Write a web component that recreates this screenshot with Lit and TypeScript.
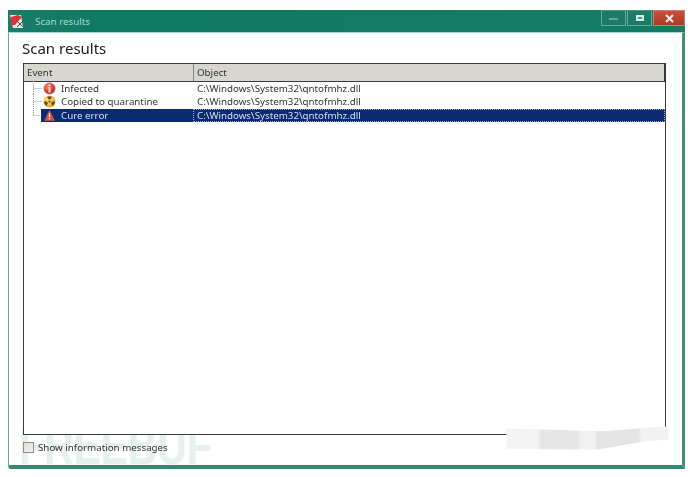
import { LitElement, html, css, svg } from "lit";
import { customElement } from "lit/decorators.js";

const path = "C:\\Windows\\System32\\qntofmhz.dll";

const infoIcon = html`<svg class="ic" viewBox="0 0 13 13"><defs><radialGradient id="r" cx=".4" cy=".35" r=".75"><stop offset="0" stop-color="#f09080"/><stop offset=".6" stop-color="#d5392b"/><stop offset="1" stop-color="#a81f18"/></radialGradient></defs><circle cx="6.5" cy="6.5" r="5.8" fill="url(#r)" stroke="#b9b2b0" stroke-width=".6"/><rect x="5.5" y="2.3" width="2" height="1.8" fill="#f6ded8"/><rect x="5.5" y="5.2" width="2" height="5.4" fill="#f6ded8"/></svg>`;

const radIcon = html`<svg class="ic" viewBox="0 0 13 13"><defs><radialGradient id="y" cx=".4" cy=".35" r=".8"><stop offset="0" stop-color="#fbe58a"/><stop offset=".7" stop-color="#e8b02c"/><stop offset="1" stop-color="#b58318"/></radialGradient></defs><circle cx="6.5" cy="6.5" r="6" fill="url(#y)"/><circle cx="6.5" cy="6.5" r="1.1" fill="#6a4c20"/><path d="M5.7 4.6 4.1 1.9A5.3 5.3 0 0 1 8.9 1.9L7.3 4.6A2.3 2.3 0 0 0 5.7 4.6Z" fill="#6a4c20"/><path d="M8.9 6.5H12A5.3 5.3 0 0 1 9.5 10.9L8 8.3A2.3 2.3 0 0 0 8.9 6.5Z" fill="#6a4c20"/><path d="M5 8.3 3.5 10.9A5.3 5.3 0 0 1 1 6.5H4.1A2.3 2.3 0 0 0 5 8.3Z" fill="#6a4c20"/></svg>`;

const warnIcon = html`<svg class="ic" viewBox="0 0 13 13"><path d="M6.5 1.5 11.5 11.5H1.5Z" fill="#d4503c" stroke="#c9604f" stroke-width=".5"/><rect x="5.8" y="4.4" width="1.4" height="3.8" fill="#f4dcd4"/><rect x="5.8" y="9" width="1.4" height="1.5" fill="#f4dcd4"/></svg>`;

const rows = [
  { icon: infoIcon, label: "Infected", sel: false },
  { icon: radIcon, label: "Copied to quarantine", sel: false },
  { icon: warnIcon, label: "Cure error", sel: true },
];

@customElement("app-root")
export class AppRoot extends LitElement {
  static styles = css`
    :host {
      display: block;
      width: 690px;
      height: 477px;
      background: #fff;
      overflow: hidden;
      position: relative;
      font-family: "Noto Sans", "DejaVu Sans", sans-serif;
      font-size: 9.75px;
      color: #333;
    }
    .desk {
      box-sizing: border-box;
      height: 477px;
      padding: 10px 5px 8px 8px;
      display: flex;
      position: relative;
      z-index: 1;
      filter: blur(0.3px);
    }
    .win {
      flex: 1;
      display: flex;
      flex-direction: column;
      min-width: 0;
    }
    .title {
      height: 22px;
      flex: none;
      background: linear-gradient(90deg, #1a7d68 0, #0f7a62 12%, #137c64 100%);
      display: flex;
      align-items: center;
      color: #a9d8cb;
      font-size: 9.8px;
      padding-left: 2px;
    }
    .logo {
      width: 13px;
      height: 14px;
      margin-right: 12px;
      flex: none;
    }
    .caps {
      margin-left: auto;
      display: flex;
      align-self: flex-start;
      gap: 1px;
      height: 16px;
    }
    .cap {
      box-sizing: border-box;
      width: 25px;
      border: 1px solid #5fae9c;
      border-top-color: #3d9582;
      background: #1d7a67;
      display: flex;
      align-items: center;
      justify-content: center;
    }
    .cap.close {
      width: 32px;
      background: linear-gradient(#c8503a, #ab3a28);
      border-color: #cf7d6d;
    }
    .body {
      flex: 1;
      min-height: 0;
      box-sizing: border-box;
      border-left: 1px solid #5fa896;
      border-right: 3px solid #3f8f7c;
      border-bottom: 4px solid #2f8a72;
      border-top: 1px solid #a7ded0;
      border-bottom-left-radius: 3px;
      padding: 4px 16px 0 14px;
      display: flex;
      flex-direction: column;
    }
    h1 {
      margin: 0 0 3px -1px;
      font-size: 15px;
      font-weight: 400;
      line-height: 23px;
      color: #1c1c1c;
    }
    .table {
      box-sizing: border-box;
      height: 372px;
      flex: none;
      border: 1px solid #3a3a3a;
      display: flex;
      flex-direction: column;
      background: #fff;
    }
    .head {
      display: grid;
      grid-template-columns: 169px 1fr;
      height: 18px;
      box-sizing: border-box;
      flex: none;
      background: #d7d6d0;
      border-bottom: 1px solid #3c3c3c;
      border-right: 1px solid #3a3a3a;
    }
    .head div {
      padding-left: 3px;
      line-height: 17px;
      color: #333;
    }
    .head div + div {
      border-left: 1px solid #85857f;
    }
    .row {
      display: grid;
      grid-template-columns: 169px 1fr;
      height: 13px;
      line-height: 13px;
      position: relative;
    }
    .ev {
      display: flex;
      align-items: center;
      padding-left: 19px;
      gap: 5px;
    }
    .row .ob {
      padding-left: 4px;
      white-space: nowrap;
    }
    .row.sel {
      margin-top: 1px;
      color: #d6dff0;
      background: linear-gradient(90deg, transparent 17px, #0c2a72 17px);
    }
    .row.sel .ob {
      outline: 1px dotted #9fb2d8;
      outline-offset: -1px;
    }
    .ic {
      width: 13px;
      height: 13px;
      flex: none;
    }
    .tree {
      position: absolute;
      left: 9px;
      top: -1px;
      width: 9px;
      height: 14px;
      pointer-events: none;
    }
    .foot {
      flex: 1;
      display: flex;
      align-items: center;
      padding-bottom: 6px;
      gap: 4px;
    }
    .check {
      box-sizing: border-box;
      width: 11px;
      height: 11px;
      border: 1px solid #8d8d8d;
      background: linear-gradient(135deg, #dcdcd8, #f4f4f2);
      flex: none;
    }
    .mark {
      position: absolute;
      left: 19px;
      top: 422px;
      font: 700 51px/50px "Liberation Sans", sans-serif;
      color: #e6f0ec;
      transform: scaleX(0.8);
      transform-origin: left top;
      white-space: nowrap;
    }
    .smudge {
      position: absolute;
      z-index: 2;
      left: 506px;
      top: 426px;
      width: 163px;
      height: 24px;
      background: linear-gradient(90deg, #f4f4f4 0 20%, #e6e6e6 20% 45%, #f1f1f1 45% 55%, #e4e4e4 55% 82%, #f2f2f2 82%);
      filter: blur(1px);
      clip-path: polygon(0 10%, 60% 22%, 100% 0, 100% 55%, 80% 70%, 55% 100%, 0 95%);
    }
  `;

  render() {
    return html`
      <div class="mark">FREEBUF</div>
      <div class="desk">
        <div class="win">
          <div class="title">
            <svg class="logo" viewBox="0 0 13 14">
              <path d="M0 1H11L13 14H3Z" fill="#e8e4e4"/>
              <path d="M1 3 8 1 12 3 5 11 1 11Z" fill="#d8353a"/>
              <path d="M7.5 7.5 12.5 12.5M12.5 7.5 7 13" stroke="#4a4a4a" fill="none"/>
            </svg>
            <span>Scan results</span>
            <div class="caps">
              <div class="cap"><svg width="9" height="3"><rect width="9" height="2" y="1" fill="#5ea693"/></svg></div>
              <div class="cap"><svg width="8" height="6"><rect x="1" y="1" width="6" height="4" fill="#4a9c88" stroke="#cdeee5" stroke-width="2"/></svg></div>
              <div class="cap close"><svg width="9" height="9" viewBox="0 0 9 9"><path d="M1 1 8 8M8 1 1 8" stroke="#f6e6de" stroke-width="2.2"/></svg></div>
            </div>
          </div>
          <div class="body">
            <h1>Scan results</h1>
            <div class="table">
              <div class="head"><div>Event</div><div>Object</div></div>
              ${rows.map(
                (r, i) => html`<div class="row ${r.sel ? "sel" : ""}">
                  <svg class="tree" viewBox="0 0 9 14">
                    ${svg`<path d="M.5 0V${i === 2 ? 7.5 : 14}M.5 7.5H9" stroke="#9a9a9a" stroke-dasharray="1 1" fill="none"/>`}
                  </svg>
                  <div class="ev">${r.icon}<span>${r.label}</span></div>
                  <div class="ob">${path}</div>
                </div>`
              )}
            </div>
            <div class="foot"><span class="check"></span><span>Show information messages</span></div>
          </div>
        </div>
      </div>
      <div class="smudge"></div>
    `;
  }
}
